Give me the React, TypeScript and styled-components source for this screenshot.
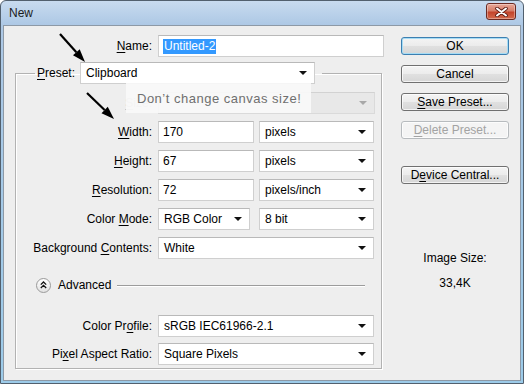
import React from 'react';
import styled, { createGlobalStyle } from 'styled-components';

const GlobalStyle = createGlobalStyle`
  html, body { margin: 0; padding: 0; background: #fff; }
  body {
    font-family: "Liberation Sans", Arial, sans-serif;
    font-size: 12px;
    color: #000;
  }
`;

const Window = styled.div`
  position: relative;
  width: 524px;
  height: 384px;
  box-sizing: border-box;
  display: flex;
  flex-direction: column;
  padding: 0 2px 2px;
  border: 1px solid #52606e;
  border-radius: 6px 6px 0 0;
  background: linear-gradient(180deg, #c8dbef 0, #adc8e5 24px, #9ccbe9 100%);
  overflow: hidden;
`;

const TitleBar = styled.div`
  height: 24px;
  flex-shrink: 0;
  display: flex;
  align-items: center;
  justify-content: space-between;
  padding: 0 5px 0 6px;
`;

const Title = styled.span`
  color: #1b1b1b;
  font-size: 12px;
`;

const CloseButton = styled.div`
  width: 30px;
  height: 17px;
  margin-top: -3px;
  box-sizing: border-box;
  display: flex;
  align-items: center;
  justify-content: center;
  border: 1px solid #6b2a22;
  border-radius: 3px;
  background: linear-gradient(180deg, #e8a899 0%, #d67e69 45%, #c3452c 55%, #d36a4d 100%);
  box-shadow: inset 0 0 0 1px rgba(255, 255, 255, 0.35);
`;

const Body = styled.div`
  flex: 1;
  display: flex;
  background: #eeeeee;
  border: 1px solid #8d99a6;
`;

const LeftPanel = styled.div`
  width: 387px;
  box-sizing: border-box;
  padding: 9px 0 0 11px;
  display: flex;
  flex-direction: column;
`;

const NameRow = styled.div`
  display: flex;
  align-items: center;
  gap: 6px;
  height: 22px;
`;

const Label = styled.span<{ $w: number; $faded?: boolean }>`
  width: ${p => p.$w}px;
  text-align: right;
  white-space: nowrap;
  color: ${p => (p.$faded ? '#b8b8b8' : '#000')};
`;

const TextInput = styled.div<{ $w: number }>`
  width: ${p => p.$w}px;
  height: 22px;
  box-sizing: border-box;
  display: flex;
  align-items: center;
  padding-left: 4px;
  background: #fff;
  border: 1px solid #cfcfcf;
  border-top-color: #b9b9b9;
`;

const Selected = styled.span`
  background: #3399ff;
  color: #fff;
  padding: 0 1px;
  line-height: 15px;
`;

const SelectBox = styled.div<{ $w: number; $disabled?: boolean }>`
  width: ${p => p.$w}px;
  height: 22px;
  box-sizing: border-box;
  display: flex;
  align-items: center;
  justify-content: space-between;
  padding: 0 7px 0 5px;
  background: ${p => (p.$disabled ? '#e8e8e8' : '#fff')};
  border: 1px solid ${p => (p.$disabled ? '#dadada' : '#cfcfcf')};
  border-top-color: ${p => (p.$disabled ? '#d2d2d2' : '#b9b9b9')};
`;

const Caret = styled.span<{ $disabled?: boolean }>`
  width: 0;
  height: 0;
  border-left: 4px solid transparent;
  border-right: 4px solid transparent;
  border-top: 4px solid ${p => (p.$disabled ? '#a8a8a8' : '#111')};
`;

const Group = styled.fieldset`
  width: 367px;
  box-sizing: border-box;
  margin: 5px 0 0;
  padding: 0 0 3px;
  border: 1px solid #b2b2b2;
  box-shadow: 1px 1px 0 #fff, inset 1px 1px 0 #fff;
`;

const Legend = styled.legend`
  display: flex;
  align-items: center;
  gap: 5px;
  margin-left: 19px;
  padding: 0 7px 0 2px;
`;

const Rows = styled.div<{ $gap: number }>`
  display: flex;
  flex-direction: column;
  gap: ${p => p.$gap}px;
  padding-top: 8px;
`;

const FieldRow = styled.div`
  display: flex;
  align-items: center;
  gap: 6px;
  height: 22px;
`;

const Controls = styled.div`
  width: 216px;
  display: flex;
  justify-content: space-between;
`;

const AdvancedRow = styled.div`
  display: flex;
  align-items: center;
  height: 16px;
  margin: 18px 0 14px;
  padding-left: 20px;
`;

const Disclosure = styled.div`
  width: 15px;
  height: 15px;
  box-sizing: border-box;
  border-radius: 50%;
  border: 1px solid #9a9a9a;
  background: linear-gradient(180deg, #ffffff, #e2e2e2);
  display: flex;
  align-items: center;
  justify-content: center;
`;

const AdvancedText = styled.span`
  margin-left: 7px;
`;

const Rule = styled.div`
  flex: 1;
  height: 1px;
  margin: 0 16px 0 6px;
  background: #9c9c9c;
  box-shadow: 0 1px 0 #fff;
`;

const RightColumn = styled.div`
  display: flex;
  flex-direction: column;
  padding: 11px 0 0 10px;
  width: 108px;
`;

const Button = styled.div<{ $default?: boolean; $disabled?: boolean; $gap: number }>`
  width: 108px;
  height: 18px;
  margin-top: ${p => p.$gap}px;
  box-sizing: border-box;
  display: flex;
  align-items: center;
  justify-content: center;
  border: 1px solid ${p => (p.$default ? '#3c7fb1' : p.$disabled ? '#b7bbbe' : '#707070')};
  border-radius: 3px;
  background: ${p =>
    p.$disabled
      ? '#f4f4f4'
      : 'linear-gradient(180deg, #f4f4f4 0%, #ececec 48%, #e0e0e0 52%, #d6d6d6 100%)'};
  color: ${p => (p.$disabled ? '#a3a3a3' : '#000')};
  box-shadow: inset 0 0 0 1px ${p => (p.$default ? '#a6dcf5' : 'rgba(255,255,255,0.7)')};
`;

const SizeInfo = styled.div`
  margin-top: 67px;
  display: flex;
  flex-direction: column;
  align-items: center;
  gap: 11px;
  line-height: 14px;
`;

const Tooltip = styled.div`
  position: absolute;
  left: 125px;
  top: 82px;
  width: 185px;
  height: 30px;
  box-sizing: border-box;
  padding-left: 11px;
  display: flex;
  align-items: center;
  white-space: nowrap;
  background: rgba(248, 248, 248, 0.92);
  color: #6f6f6f;
  font-size: 13px;
  letter-spacing: 0.5px;
`;

const Annotations = styled.svg`
  position: absolute;
  left: -1px;
  top: -1px;
  pointer-events: none;
`;

const Key = styled.u`
  text-decoration-thickness: 1px;
  text-underline-offset: 2px;
`;

const Select = ({ w, value, disabled }: { w: number; value?: string; disabled?: boolean }) => (
  <SelectBox $w={w} $disabled={disabled}>
    <span>{value}</span>
    <Caret $disabled={disabled} />
  </SelectBox>
);

const Arrow = ({ tail, tip }: { tail: [number, number]; tip: [number, number] }) => {
  const dx = tip[0] - tail[0];
  const dy = tip[1] - tail[1];
  const len = Math.hypot(dx, dy);
  const ux = dx / len;
  const uy = dy / len;
  const bx = tip[0] - ux * 13;
  const by = tip[1] - uy * 13;
  const px = -uy * 4.5;
  const py = ux * 4.5;
  return (
    <g>
      <line x1={tail[0]} y1={tail[1]} x2={bx} y2={by} stroke="#000" strokeWidth={2.2} />
      <polygon points={`${tip[0]},${tip[1]} ${bx + px},${by + py} ${bx - px},${by - py}`} fill="#000" />
    </g>
  );
};

export default function App() {
  return (
    <>
      <GlobalStyle />
      <Window>
        <TitleBar>
          <Title>New</Title>
          <CloseButton>
            <svg width="13" height="10" viewBox="0 0 13 10">
              <path d="M2 1.5 L11 8.5 M11 1.5 L2 8.5" stroke="#5a1a12" strokeWidth="3.6" strokeLinecap="round" />
              <path d="M2 1.5 L11 8.5 M11 1.5 L2 8.5" stroke="#fff" strokeWidth="2" strokeLinecap="round" />
            </svg>
          </CloseButton>
        </TitleBar>
        <Body>
          <LeftPanel>
            <NameRow>
              <Label $w={137}>
                <Key>N</Key>ame:
              </Label>
              <TextInput $w={226}>
                <Selected>Untitled-2</Selected>
              </TextInput>
            </NameRow>
            <Group>
              <Legend>
                <span>
                  <Key>P</Key>reset:
                </span>
                <Select w={235} value="Clipboard" />
              </Legend>
              <Rows $gap={7}>
                <FieldRow>
                  <Label $w={136} $faded>
                    <Key>S</Key>ize:
                  </Label>
                  <Select w={217} disabled />
                </FieldRow>
                <FieldRow>
                  <Label $w={136}>
                    <Key>W</Key>idth:
                  </Label>
                  <Controls>
                    <TextInput $w={96}>170</TextInput>
                    <Select w={115} value="pixels" />
                  </Controls>
                </FieldRow>
                <FieldRow>
                  <Label $w={136}>
                    <Key>H</Key>eight:
                  </Label>
                  <Controls>
                    <TextInput $w={96}>67</TextInput>
                    <Select w={115} value="pixels" />
                  </Controls>
                </FieldRow>
                <FieldRow>
                  <Label $w={136}>
                    <Key>R</Key>esolution:
                  </Label>
                  <Controls>
                    <TextInput $w={96}>72</TextInput>
                    <Select w={115} value="pixels/inch" />
                  </Controls>
                </FieldRow>
                <FieldRow>
                  <Label $w={136}>
                    Color <Key>M</Key>ode:
                  </Label>
                  <Controls>
                    <Select w={92} value="RGB Color" />
                    <Select w={115} value="8 bit" />
                  </Controls>
                </FieldRow>
                <FieldRow>
                  <Label $w={136}>
                    Background <Key>C</Key>ontents:
                  </Label>
                  <Select w={216} value="White" />
                </FieldRow>
              </Rows>
              <AdvancedRow>
                <Disclosure>
                  <svg width="7" height="8" viewBox="0 0 7 8">
                    <path d="M0.8 3.6 L3.5 1 L6.2 3.6 M0.8 7 L3.5 4.4 L6.2 7" fill="none" stroke="#111" strokeWidth="1.3" />
                  </svg>
                </Disclosure>
                <AdvancedText>Advanced</AdvancedText>
                <Rule />
              </AdvancedRow>
              <Rows $gap={6}>
                <FieldRow>
                  <Label $w={136}>
                    Color Pr<Key>o</Key>file:
                  </Label>
                  <Select w={216} value="sRGB IEC61966-2.1" />
                </FieldRow>
                <FieldRow>
                  <Label $w={136}>
                    Pi<Key>x</Key>el Aspect Ratio:
                  </Label>
                  <Select w={216} value="Square Pixels" />
                </FieldRow>
              </Rows>
            </Group>
          </LeftPanel>
          <RightColumn>
            <Button $default $gap={0}>OK</Button>
            <Button $gap={10}>Cancel</Button>
            <Button $gap={10}>
              <span>
                <Key>S</Key>ave Preset...
              </span>
            </Button>
            <Button $disabled $gap={10}>
              <span>
                <Key>D</Key>elete Preset...
              </span>
            </Button>
            <Button $gap={27}>
              <span>
                D<Key>e</Key>vice Central...
              </span>
            </Button>
            <SizeInfo>
              <span>Image Size:</span>
              <span>33,4K</span>
            </SizeInfo>
          </RightColumn>
        </Body>
        <Tooltip>Don’t change canvas size!</Tooltip>
        <Annotations width={524} height={384}>
          <Arrow tail={[60, 34]} tip={[85, 62]} />
          <Arrow tail={[87, 93]} tip={[114, 119]} />
        </Annotations>
      </Window>
    </>
  );
}
